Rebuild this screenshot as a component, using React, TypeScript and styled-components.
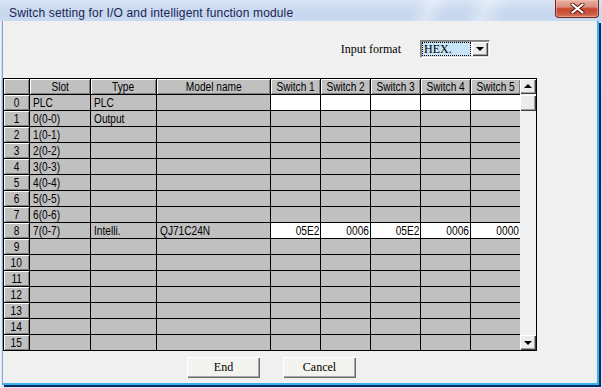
import React from 'react';
import styled, { createGlobalStyle, css } from 'styled-components';

const GlobalStyle = createGlobalStyle`
  html, body { margin: 0; padding: 0; background: #fff; }
  body { width: 602px; height: 388px; overflow: hidden; }
  * { box-sizing: border-box; }
`;

const Window = styled.div`
  width: 602px;
  height: 388px;
  display: flex;
  flex-direction: column;
  padding: 0 3px 3px 2px;
  background: linear-gradient(180deg, #d2dff2 0%, #c6d7ef 30%, #cfdcf1 70%, #dde7f5 100%);
  box-shadow: inset 1px 0 0 #eef3fa;
`;

const TitleBar = styled.div`
  height: 21px;
  display: flex;
  align-items: flex-start;
  justify-content: space-between;
  padding-left: 9px;
  margin-left: -2px;
  margin-right: -3px;
  padding-right: 3px;
  background:
    linear-gradient(110deg, transparent 0%, transparent 68%, rgba(255,255,255,0.35) 71%, transparent 74%, transparent 77%, rgba(255,255,255,0.35) 80%, transparent 84%, transparent 100%),
    linear-gradient(180deg, #d8e4f5 0%, #c6d7ef 60%, #c9d9f0 100%);
`;

const Title = styled.span`
  font-family: "Liberation Sans", Arial, sans-serif;
  font-size: 12px;
  line-height: 16px;
  margin-top: 5px;
  color: #1b2453;
  letter-spacing: 0.15px;
`;

const CloseButton = styled.div`
  width: 44px;
  height: 18px;
  display: flex;
  align-items: center;
  justify-content: center;
  border: 1px solid #6e2a20;
  border-top: none;
  border-radius: 0 0 4px 4px;
  background: linear-gradient(180deg, #e8b0a2 0%, #db8e7c 40%, #c8472f 52%, #cb5940 80%, #d87a64 100%);
  box-shadow: inset 0 0 0 1px rgba(255, 200, 190, 0.45);
`;

const ClientFrame = styled.div`
  flex: 1;
  display: flex;
  flex-direction: column;
  background: #f0f0f0;
  border-left: 1px solid #8aa5d4;
  border-right: 2px solid #39b3ec;
  border-bottom: 2px solid #39b3ec;
  box-shadow: 2px 2px 0 #0c2a64;
  padding-top: 19px;
`;

const FormatRow = styled.div`
  display: flex;
  justify-content: flex-end;
  align-items: center;
  gap: 19px;
  padding-right: 107px;
  height: 18px;
`;

const SerifText = styled.span`
  font-family: "Liberation Serif", "Times New Roman", serif;
  font-size: 12px;
  color: #000;
`;

const Combo = styled.div`
  width: 70px;
  height: 18px;
  display: flex;
  padding: 1px;
  background: #fff;
  border: 1px solid;
  border-color: #808080 #ffffff #ffffff #808080;
  box-shadow: inset 1px 1px 0 #8c8c8c, inset -1px -1px 0 #dcdcdc;
`;

const ComboValue = styled.div`
  flex: 1;
  display: flex;
  align-items: center;
  padding-left: 1px;
  background: #c8e5f7;
  border: 1px dotted #000;
  font-family: "Liberation Serif", "Times New Roman", serif;
  font-size: 12px;
  line-height: 12px;
  margin-right: 1px;
`;

const raised = css`
  box-shadow: inset 1px 1px 0 #ffffff, inset -1px -1px 0 #404040, inset -2px -2px 0 #a0a0a0;
`;

const ArrowButton = styled.div<{ $h: number }>`
  width: 16px;
  height: ${p => p.$h}px;
  flex: none;
  display: flex;
  align-items: center;
  justify-content: center;
  background: #ececec;
  ${raised}
`;

const Triangle = styled.div<{ $up?: boolean }>`
  width: 0;
  height: 0;
  border-left: 4px solid transparent;
  border-right: 4px solid transparent;
  ${p => (p.$up ? css`border-bottom: 4px solid #000;` : css`border-top: 4px solid #000;`)}
  margin-top: ${p => (p.$up ? '-1px' : '0')};
`;

const TableWrap = styled.div`
  margin-top: 20px;
  width: 534px;
  height: 273px;
  display: flex;
  border: 1px solid #000;
  background: #f0f0f0;
`;

const Grid = styled.div`
  display: grid;
  grid-template-columns: 25px 60px 65px 113px repeat(5, 49px);
  grid-auto-rows: 15px;
  gap: 1px;
  background: #000;
  width: 516px;
  font-family: "Liberation Sans", Arial, sans-serif;
  font-size: 13px;
  color: #000;
`;

const HeaderCell = styled.div`
  background: #c0c0c0;
  box-shadow: inset 1px 1px 0 #ffffff, inset -1px -1px 0 #808080;
  display: flex;
  align-items: center;
  justify-content: center;
  line-height: 15px;
  white-space: nowrap;
  overflow: hidden;
`;

const Cell = styled.div<{ $white?: boolean; $right?: boolean }>`
  background: ${p => (p.$white ? '#ffffff' : '#c0c0c0')};
  display: flex;
  align-items: center;
  justify-content: ${p => (p.$right ? 'flex-end' : 'flex-start')};
  padding: 0 ${p => (p.$right ? '1px' : '0')} 0 ${p => (p.$right ? '0' : '3px')};
  line-height: 15px;
  white-space: nowrap;
  overflow: hidden;
`;

/* the original grid font is a tall, narrow bitmap sans */
const NarrowText = styled.span<{ $origin?: 'left' | 'center' | 'right' }>`
  display: inline-block;
  transform: scaleX(0.78);
  transform-origin: ${p => p.$origin ?? 'center'} center;
`;

const Scrollbar = styled.div`
  width: 16px;
  display: flex;
  flex-direction: column;
  background: #f0f0f0;
`;

const Thumb = styled.div`
  height: 16px;
  margin-top: 1px;
  background: #ececec;
  ${raised}
`;

const Track = styled.div`
  flex: 1;
`;

const ButtonRow = styled.div`
  display: flex;
  gap: 23px;
  padding-left: 184px;
  margin-top: 6px;
`;

const PushButton = styled.div`
  width: 73px;
  height: 21px;
  display: flex;
  align-items: center;
  justify-content: center;
  background: #f3f3ef;
  box-shadow: inset 1px 1px 0 #ffffff, inset -1px -1px 0 #6a6a6a, inset -2px -2px 0 #a8a8a8;
  font-family: "Liberation Serif", "Times New Roman", serif;
  font-size: 12px;
  color: #000;
  padding-bottom: 1px;
`;

const headers = ['Slot', 'Type', 'Model name', 'Switch 1', 'Switch 2', 'Switch 3', 'Switch 4', 'Switch 5'];

type Row = { slot: string; type: string; model: string; sw: string[] | null };

const rows: Row[] = Array.from({ length: 16 }, (_, i) => {
  if (i === 0) return { slot: 'PLC', type: 'PLC', model: '', sw: ['', '', '', '', ''] };
  if (i === 1) return { slot: '0(0-0)', type: 'Output', model: '', sw: null };
  if (i === 8) return { slot: '7(0-7)', type: 'Intelli.', model: 'QJ71C24N', sw: ['05E2', '0006', '05E2', '0006', '0000'] };
  if (i <= 7) return { slot: `${i - 1}(0-${i - 1})`, type: '', model: '', sw: null };
  return { slot: '', type: '', model: '', sw: null };
});

const CloseGlyph = () => (
  <svg width="15" height="11" viewBox="0 0 15 11">
    <path d="M2.5 1.5 L12.5 9.5 M12.5 1.5 L2.5 9.5" stroke="#5a1a12" strokeWidth="4" strokeLinecap="round" />
    <path d="M2.5 1.5 L12.5 9.5 M12.5 1.5 L2.5 9.5" stroke="#ffffff" strokeWidth="2.2" strokeLinecap="round" />
  </svg>
);

export default function App() {
  return (
    <>
      <GlobalStyle />
      <Window>
        <TitleBar>
          <Title>Switch setting for I/O and intelligent function module</Title>
          <CloseButton>
            <CloseGlyph />
          </CloseButton>
        </TitleBar>
        <ClientFrame>
          <FormatRow>
            <SerifText>Input format</SerifText>
            <Combo>
              <ComboValue>HEX.</ComboValue>
              <ArrowButton $h={14}>
                <Triangle />
              </ArrowButton>
            </Combo>
          </FormatRow>
          <TableWrap>
            <Grid>
              <HeaderCell />
              {headers.map(h => (
                <HeaderCell key={h}>
                  <NarrowText>{h}</NarrowText>
                </HeaderCell>
              ))}
              {rows.map((r, i) => (
                <React.Fragment key={i}>
                  <HeaderCell>
                    <NarrowText>{i}</NarrowText>
                  </HeaderCell>
                  <Cell>
                    <NarrowText $origin="left">{r.slot}</NarrowText>
                  </Cell>
                  <Cell>
                    <NarrowText $origin="left">{r.type}</NarrowText>
                  </Cell>
                  <Cell>
                    <NarrowText $origin="left">{r.model}</NarrowText>
                  </Cell>
                  {[0, 1, 2, 3, 4].map(k => (
                    <Cell key={k} $white={!!r.sw} $right>
                      <NarrowText $origin="right">{r.sw ? r.sw[k] : ''}</NarrowText>
                    </Cell>
                  ))}
                </React.Fragment>
              ))}
            </Grid>
            <Scrollbar>
              <ArrowButton $h={15}>
                <Triangle $up />
              </ArrowButton>
              <Thumb />
              <Track />
              <ArrowButton $h={15}>
                <Triangle />
              </ArrowButton>
            </Scrollbar>
          </TableWrap>
          <ButtonRow>
            <PushButton>End</PushButton>
            <PushButton>Cancel</PushButton>
          </ButtonRow>
        </ClientFrame>
      </Window>
    </>
  );
}
